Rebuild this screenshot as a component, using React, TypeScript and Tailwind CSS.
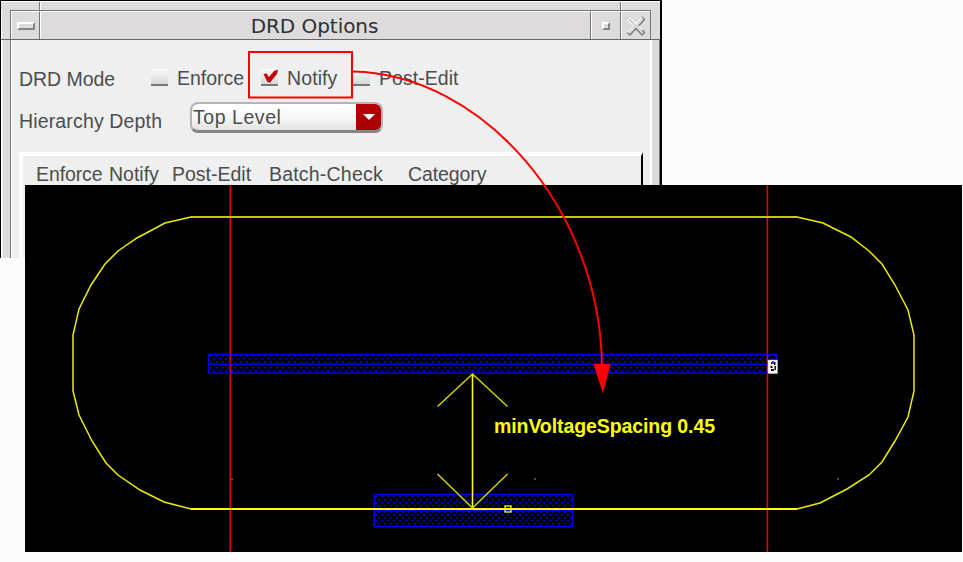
import React from "react";

const label = "whitespace-pre text-[#4b4d4d] text-[19.5px] leading-[24px]";

function Checkbox({ checked = false }: { checked?: boolean }) {
  return (
    <span className="relative block h-[17px] w-[17px] border-b-2 border-[#777] bg-gradient-to-b from-[#fafafa] to-[#d8d8d8]">
      {checked && (
        <svg className="absolute left-0 top-0" width="18" height="17" viewBox="0 0 18 17">
          <path d="M2.5 5 L5.5 4.5 L8 8 L13 2 L17 0.5 L16 5 L9 13.5 L6.5 13 Z" fill="#c4000a" />
        </svg>
      )}
    </span>
  );
}

function TitleBar() {
  return (
    <>
      <div className="flex h-[9px] border-t border-white">
        <div className="w-[39px] border-r border-[#777]" />
        <div className="w-[581px] border-l border-r border-l-white border-r-[#777]" />
        <div className="flex-1 border-l border-white" />
      </div>
      <div className="flex h-[30px] border-b border-[#666]">
        <div className="w-[9px] border-l border-white" />
        <div className="flex w-[641px] border border-b-0 border-[#747474]">
          <div className="flex w-[29px] items-center justify-center border-l border-r border-t border-l-white border-r-[#747474] border-t-white">
            <div className="h-[8px] w-[18px] border-2 border-b-[#858585] border-l-white border-r-[#858585] border-t-white" />
          </div>
          <div className="flex w-[551px] justify-center border-l border-r border-t border-l-white border-r-[#747474] border-t-white">
            <div className="whitespace-nowrap pr-[2px] pt-[1px] font-['DejaVu_Sans',sans-serif] text-[20px] leading-[27px] tracking-[-0.05px] text-[#303030]">
              DRD Options
            </div>
          </div>
          <div className="flex w-[30px] items-center justify-center border-l border-r border-t border-l-white border-r-[#747474] border-t-white">
            <div className="h-[8px] w-[8px] border-2 border-b-[#858585] border-l-white border-r-[#858585] border-t-white" />
          </div>
          <div className="flex flex-1 items-center justify-center border-l border-t border-white">
            <svg width="20" height="20" viewBox="0 0 20 20" fill="none">
              <path d="M1.5 3 L4 1 L10 7.5 L16 1 L18.5 3.5 L12.5 10 L18.5 16.5 L16 19 L10 12.5 L4 19 L1.5 16.5 L7.5 10 Z" stroke="#7a7a7a" strokeWidth="1.4" />
              <path d="M7.5 10 L1.5 3.5 L4 1 L10 7.5 L16 1 M7.5 10 L1.5 16.5 M12.5 10 L16.5 14" stroke="#fff" strokeWidth="1.4" />
            </svg>
          </div>
        </div>
      </div>
    </>
  );
}

function OptionsDialog() {
  return (
    <div className="flex h-[258px] w-[662px] flex-col border-l border-r-2 border-t border-black bg-[#dddbdc]">
      <TitleBar />
      <div className="flex min-h-0 flex-1">
        <div className="w-[10px] border-l-2 border-r border-l-[#f8f8f8] border-r-[#777]" />
        <div className="w-[641px] border-l border-r-2 border-white bg-[#efefef] font-['Liberation_Sans',sans-serif]">
          <div className="flex h-[52px] pl-[7px] pt-[26px]">
            <div className={`${label} w-[132px] pt-[1px] tracking-[-0.05px]`}>DRD Mode</div>
            <div className="pt-[3px]"><Checkbox /></div>
            <div className={`${label} w-[93px] pl-[9px] tracking-[0px]`}>Enforce</div>
            <div className="pt-[3px]"><Checkbox checked /></div>
            <div className={`${label} w-[75px] pl-[9px] tracking-[0.1px]`}>Notify</div>
            <div className="pt-[3px]"><Checkbox /></div>
            <div className={`${label} pl-[9px] tracking-[0.05px]`}>Post-Edit</div>
          </div>
          <div className="flex h-[60px] pl-[7px] pt-[10px]">
            <div className={`${label} w-[171px] pt-[7px] tracking-[0.15px]`}>Hierarchy Depth</div>
            <div className="flex h-[31px] w-[193px] overflow-hidden rounded-[8px] border-2 border-b-[3px] border-[#b5b5b5] border-b-[#858585] bg-gradient-to-b from-white via-[#f8f8f8] to-[#e3e3e3]">
              <div className={`${label} flex-1 pl-[1px] pt-[1px] tracking-[0.55px]`}>Top Level</div>
              <div className="flex w-[25px] items-center justify-center bg-gradient-to-b from-[#b8000a] to-[#a40000]">
                <svg width="12" height="8" viewBox="0 0 12 8">
                  <path d="M0 1 H12 L6 7 Z" fill="#fff" />
                </svg>
              </div>
            </div>
          </div>
          <div className="ml-[7px] flex h-[106px] w-[624px] border-l-4 border-r-2 border-t-4 border-l-white border-r-black border-t-white pl-[13px] pt-[6px]">
            <div className={`${label} w-[73px] tracking-[-0.1px]`}>Enforce</div>
            <div className={`${label} w-[63px]`}>Notify</div>
            <div className={`${label} w-[97px]`}>Post-Edit</div>
            <div className={`${label} w-[139px] tracking-[0.2px]`}>Batch-Check</div>
            <div className={`${label} tracking-[-0.1px]`}>Category</div>
          </div>
        </div>
        <div className="flex-1 border-r border-[#777]" />
      </div>
    </div>
  );
}

const outline =
  "191,217 165,223 137,238 118,251 105,264 91,285 79,309 73,335 73,391 79,415 92,441 106,463 118,475 140,490 164,502 191,509 797,509 820,503 847,489 869,475 882,462 895,441 908,417 914,391 914,335 908,310 895,285 882,264 869,251 851,237 823,223 797,217";

function LayoutCanvas() {
  return (
    <div className="relative ml-[25px] -mt-[73px] h-[367px] w-[937px] bg-black">
      <svg className="block" width="937" height="367" viewBox="25 185 937 367">
        <defs>
          <pattern id="dots" width="6" height="6" x="210" y="355" patternUnits="userSpaceOnUse">
            <rect x="0" y="0" width="2" height="1.6" fill="#0000dc" />
            <rect x="3" y="3" width="2" height="1.6" fill="#0000dc" />
          </pattern>
        </defs>
        <path d="M230.3 185 V552 M767.4 185 V552" stroke="#e60000" strokeWidth="1.6" />
        <g stroke="#0000f0" strokeWidth="1.4">
          <rect x="208.7" y="354.5" width="568" height="18.5" fill="url(#dots)" />
          <path d="M209 364.3 H777" />
          <rect x="374.3" y="494.5" width="198.5" height="32" fill="url(#dots)" />
          <path d="M374 510.5 H573" />
        </g>
        <polygon points={outline} fill="none" stroke="#ecec00" strokeWidth="1.5" />
        <path d="M191 217 H797" stroke="#c8c800" strokeWidth="2" />
        <path d="M191 509 H797" stroke="#ffff00" strokeWidth="2" />
        <path d="M472.5 374 V509" stroke="#ffff00" strokeWidth="1.6" />
        <path d="M437.5 406.5 L472.5 374 L507.5 406.5 M437.5 474 L472.5 508 L507.5 474" stroke="#d6d600" strokeWidth="1.4" fill="none" />
        <rect x="505" y="506" width="6" height="6" fill="none" stroke="#ffff00" strokeWidth="1.3" />
        <rect x="768" y="360" width="9.5" height="13.5" fill="#f8f4ee" stroke="#c8b8a0" strokeWidth="0.5" />
        <path d="M771 362 h1.5 v2 h-1.5 z M774 362 h1.5 v3 h-1.5 z M770.5 366 h2 v2 h-2 z M774.5 366 h1.5 v4 h-1.5 z M771 369 h3 v2 h-3 z" fill="#111" />
        <rect x="772.3" y="361" width="1.6" height="3" fill="#2222f0" />
        <path d="M231 479 h2 M534 479 h2 M837 479 h2" stroke="#999" />
        <text x="494" y="433" fill="#ffff00" fontFamily="Liberation Sans, sans-serif" fontWeight="bold" fontSize="19.5" textLength="221">
          minVoltageSpacing 0.45
        </text>
      </svg>
    </div>
  );
}

export default function App() {
  return (
    <main className="relative h-[562px] w-[963px] overflow-hidden bg-[#fcfcfc]">
      <OptionsDialog />
      <LayoutCanvas />
      <svg className="pointer-events-none absolute left-0 top-0" width="963" height="562">
        <rect x="249" y="52" width="103" height="45.5" fill="none" stroke="#f00" strokeWidth="2" />
        <path d="M353 71.5 C482 74 600 208 602 366" fill="none" stroke="#f00" strokeWidth="2" />
        <path d="M593.5 364 H610.5 L603 393.5 Z" fill="#f00" />
      </svg>
    </main>
  );
}
